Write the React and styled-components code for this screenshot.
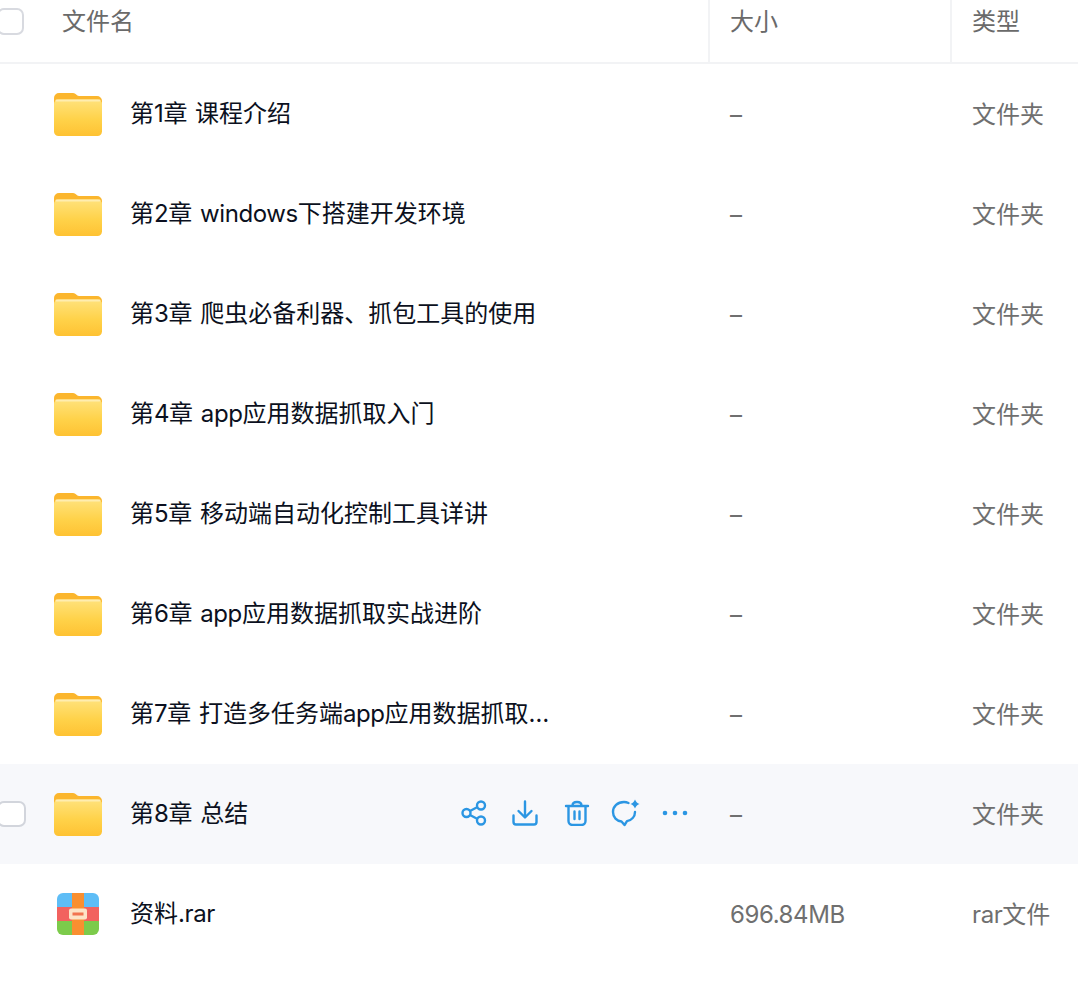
import React from "react";
import styled, { createGlobalStyle } from "styled-components";

const GlobalStyle = createGlobalStyle`
  html, body {
    margin: 0;
    padding: 0;
    background: #fff;
    overflow: hidden;
  }
  body {
    font-family: "Inter", "Noto Sans CJK SC", sans-serif;
  }
`;

const files = [
  { name: "第1章 课程介绍", size: "–", type: "文件夹" },
  { name: "第2章 windows下搭建开发环境", size: "–", type: "文件夹" },
  { name: "第3章 爬虫必备利器、抓包工具的使用", size: "–", type: "文件夹" },
  { name: "第4章 app应用数据抓取入门", size: "–", type: "文件夹" },
  { name: "第5章 移动端自动化控制工具详讲", size: "–", type: "文件夹" },
  { name: "第6章 app应用数据抓取实战进阶", size: "–", type: "文件夹" },
  { name: "第7章 打造多任务端app应用数据抓取…", size: "–", type: "文件夹" },
  { name: "第8章 总结", size: "–", type: "文件夹", hovered: true },
  { name: "资料.rar", size: "696.84MB", type: "rar文件", archive: true },
];

// latin runs are a bit narrower than Inter in the original font
const withLatin = (text) =>
  text.split(/([A-Za-z0-9.]+)/).map((part, i) =>
    i % 2 === 1 ? <Latin key={i}>{part}</Latin> : part
  );

const FolderIcon = () => (
  <svg width="48" height="43" viewBox="0 0 48 43">
    <defs>
      <linearGradient id="folderFront" x1="0" y1="0" x2="0" y2="1">
        <stop offset="0" stopColor="#ffe27c" />
        <stop offset="0.55" stopColor="#ffd249" />
        <stop offset="1" stopColor="#fec233" />
      </linearGradient>
    </defs>
    <path
      d="M0 5a5 5 0 0 1 5-5h14c3 0 3.500 3 6 3h18a5 5 0 0 1 5 5v12H0z"
      fill="#fbb62d"
    />
    <rect y="6.500" width="48" height="36.500" rx="4.500" fill="url(#folderFront)" />
    <rect x="1.500" y="6.500" width="45" height="2" rx="1" fill="#ffedb0" />
  </svg>
);

const ArchiveIcon = () => (
  <svg width="42" height="42" viewBox="0 0 42 42">
    <defs>
      <clipPath id="archiveClip">
        <rect width="42" height="42" rx="6" />
      </clipPath>
    </defs>
    <g clipPath="url(#archiveClip)">
      <rect width="42" height="14" fill="#5ebdf6" />
      <rect y="14" width="42" height="14" fill="#f2625f" />
      <rect y="28" width="42" height="14" fill="#7ccb4b" />
      <rect x="15" width="12" height="42" fill="#f98f30" />
      <rect x="12" y="15.500" width="18" height="11" rx="2" fill="#fde3c6" />
      <rect x="15.500" y="19.500" width="11" height="3" fill="#f2744f" />
    </g>
  </svg>
);

const ShareIcon = () => (
  <svg width="26" height="26" viewBox="0 0 26 26" fill="none" stroke="currentColor" strokeWidth="2.400">
    <circle cx="5.500" cy="13" r="4" />
    <circle cx="20" cy="5.500" r="4" />
    <circle cx="20" cy="20.500" r="4" />
    <path d="M9 11l7.500-4M9 15l7.500 4" />
  </svg>
);

const DownloadIcon = () => (
  <svg width="26" height="26" viewBox="0 0 26 26" fill="none" stroke="currentColor" strokeWidth="2.400" strokeLinecap="round" strokeLinejoin="round">
    <path d="M13 1.500V17M6.500 11l6.500 6.500L19.500 11" />
    <path d="M1.500 15.500V22a2.500 2.500 0 0 0 2.500 2.500h18a2.500 2.500 0 0 0 2.500-2.500v-6.500" />
  </svg>
);

const TrashIcon = () => (
  <svg width="26" height="26" viewBox="0 0 26 26" fill="none" stroke="currentColor" strokeWidth="2.400" strokeLinecap="round" strokeLinejoin="round">
    <path d="M2 6h22M8.500 5.500c0-2 1.500-3.500 4.500-3.500s4.500 1.500 4.500 3.500" />
    <path d="M4.500 6.500V21a4 4 0 0 0 4 4h9a4 4 0 0 0 4-4V6.500" />
    <path d="M10.500 11.500v7.500M15.500 11.500v7.500" />
  </svg>
);

const ChatIcon = () => (
  <svg width="30" height="28" viewBox="0 0 30 28" fill="none" stroke="currentColor" strokeWidth="2.400" strokeLinecap="round" strokeLinejoin="round">
    <path d="M17.500 4A11 11 0 0 0 13 3C6.500 3 2 7.500 2 13s3.800 9 8.500 9.500l3 3.500 2.500-3.800c4.500-1 8-4.500 8-9.200" />
    <path
      d="M24 0.500c1 2.500 2 3.500 4.500 4.500-2.500 1-3.500 2-4.500 4.500-1-2.500-2-3.500-4.500-4.500 2.500-1 3.500-2 4.500-4.500z"
      fill="currentColor"
      stroke="none"
    />
  </svg>
);

const MoreIcon = () => (
  <svg width="26" height="26" viewBox="0 0 26 26" fill="currentColor">
    <circle cx="3" cy="13" r="2.300" />
    <circle cx="13" cy="13" r="2.300" />
    <circle cx="23" cy="13" r="2.300" />
  </svg>
);

const App = () => (
  <Page>
    <GlobalStyle />
    <HeaderRow>
      <HeaderName>
        <Checkbox />
        文件名
      </HeaderName>
      <HeaderCell>大小</HeaderCell>
      <HeaderCell>类型</HeaderCell>
    </HeaderRow>
    {files.map((file) => (
      <Row key={file.name} $hovered={file.hovered}>
        <NameCell>
          <CheckSlot>{file.hovered && <RowCheckbox />}</CheckSlot>
          <IconSlot>{file.archive ? <ArchiveIcon /> : <FolderIcon />}</IconSlot>
          <FileName>{withLatin(file.name)}</FileName>
          {file.hovered && (
            <Actions>
              <ShareIcon />
              <DownloadIcon />
              <TrashIcon />
              <ChatIcon />
              <MoreIcon />
            </Actions>
          )}
        </NameCell>
        <MetaCell>{withLatin(file.size)}</MetaCell>
        <MetaCell>{withLatin(file.type)}</MetaCell>
      </Row>
    ))}
  </Page>
);

const Page = styled.div`
  width: 1078px;
  height: 994px;
  overflow: hidden;
  background: #fff;
`;

const HeaderRow = styled.div`
  display: grid;
  grid-template-columns: 708px 242px 1fr;
  height: 62px;
  border-bottom: 2px solid #f2f3f5;
  box-sizing: content-box;
`;

const HeaderCell = styled.div`
  display: flex;
  align-items: flex-start;
  padding: 6px 0 0 20px;
  border-left: 2px solid #f2f3f5;
  font-size: 24px;
  line-height: 32px;
  color: #6a6a6a;
`;

const HeaderName = styled.div`
  display: flex;
  align-items: flex-start;
  padding-top: 6px;
  font-size: 24px;
  line-height: 32px;
  color: #6a6a6a;
`;

const Checkbox = styled.span`
  flex: none;
  width: 23px;
  height: 23px;
  margin: 2px 38px 0 -3px;
  border: 2px solid #d8dae0;
  border-radius: 7px;
  background: #fff;
`;

const Row = styled.div`
  display: grid;
  grid-template-columns: 709px 242px 1fr;
  height: 100px;
  align-items: center;
  background: ${(props) => (props.$hovered ? "#f7f8fb" : "#fff")};
`;

const NameCell = styled.div`
  display: flex;
  align-items: center;
`;

const CheckSlot = styled.div`
  flex: none;
  display: flex;
  width: 54px;
`;

const RowCheckbox = styled.span`
  width: 25px;
  height: 22px;
  margin-left: -3px;
  border: 2px solid #d2d5dc;
  border-radius: 7px;
  background: #fff;
`;

const IconSlot = styled.div`
  flex: none;
  display: flex;
  justify-content: center;
  width: 48px;
  margin-right: 27px;
`;

const FileName = styled.span`
  padding-left: 1px;
  font-size: 24px;
  line-height: 32px;
  word-spacing: 1px;
  color: #0b1020;
  white-space: nowrap;
`;

const Latin = styled.span`
  letter-spacing: -0.4px;
`;

const Actions = styled.div`
  display: grid;
  grid-template-columns: 51px 52px 47px 51px 26px;
  align-items: center;
  margin: -3px 21px 0 auto;
  color: #2b96e3;
`;

const MetaCell = styled.div`
  padding: 2px 0 0 21px;
  font-size: 24px;
  line-height: 32px;
  color: #6f6f6f;
  white-space: nowrap;
`;

export default App;
